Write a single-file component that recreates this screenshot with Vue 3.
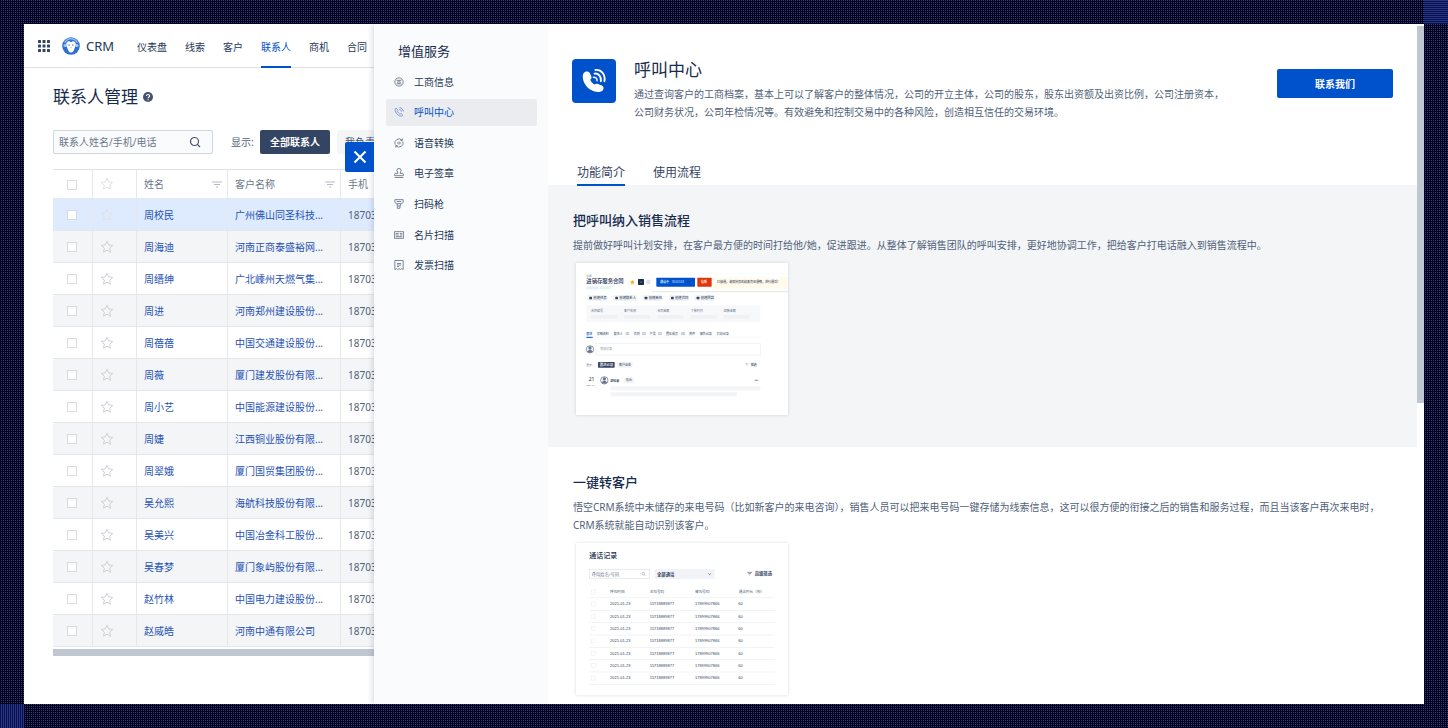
<script setup>
import { ref } from 'vue'

const navItems = ['仪表盘', '线索', '客户', '联系人', '商机', '合同']
const activeNav = ref('联系人')

const contacts = [
  ['周校民', '广州佛山同圣科技...'],
  ['周海迪', '河南正商泰盛裕网...'],
  ['周缙绅', '广北嵊州天燃气集...'],
  ['周进', '河南郑州建设股份...'],
  ['周蓓蓓', '中国交通建设股份...'],
  ['周薇', '厦门建发股份有限...'],
  ['周小艺', '中国能源建设股份...'],
  ['周婕', '江西铜业股份有限...'],
  ['周翠娥', '厦门国贸集团股份...'],
  ['吴允熙', '海航科技股份有限...'],
  ['吴美兴', '中国冶金科工股份...'],
  ['吴春梦', '厦门象屿股份有限...'],
  ['赵竹林', '中国电力建设股份...'],
  ['赵威皓', '河南中通有限公司']
]

const services = ['工商信息', '呼叫中心', '语音转换', '电子签章', '扫码枪', '名片扫描', '发票扫描']
const activeService = ref('呼叫中心')

const tabs = ['功能简介', '使用流程']
const activeTab = ref('功能简介')

const chips = [
  [36, '创建任务', 59],
  [114, '创建联系人', 70],
  [202, '创建商机', 59],
  [281, '创建合同', 59],
  [358, '创建回款', 59]
]
const fields = [[45, '合同编号'], [144, '客户名称'], [244, '合同金额'], [344, '下单时间'], [443, '回款金额']]
const detailTabs = [
  [62, '详细资料'],
  [113, '联系人'],
  [149, '(2)'],
  [173, '合同'],
  [198, '(2)'],
  [221, '产品'],
  [246, '(2)'],
  [270, '团队成员'],
  [315, '(3)'],
  [340, '附件'],
  [371, '操作记录'],
  [422, '打印记录']
]
const callHeads = [[102, '呼叫时间'], [221, '主叫号码'], [357, '被叫号码'], [488, '通话时长（秒）']]
const callRows = [0, 1, 2, 3, 4, 5, 6].map((i) => 183 + i * 37)
</script>

<template>
  <div class="desk" lang="zh-CN">
    <div class="window">
      <section class="crm">
        <header class="topbar">
          <svg class="apps" viewBox="0 0 12 12" aria-hidden="true">
            <g v-for="r in 3" :key="r">
              <rect v-for="c in 3" :key="c" :x="(c - 1) * 4.5" :y="(r - 1) * 4.5" width="3" height="3" rx="0.6" fill="#344563" />
            </g>
          </svg>
          <svg class="logo" viewBox="0 0 18 18" aria-hidden="true">
            <circle cx="9" cy="9" r="8.800" fill="#2f6fd0" />
            <path d="M2.600 5.800C4 3 6.300 1.700 9 1.700s5 1.300 6.400 4.100" fill="none" stroke="#8db8f0" stroke-width="1.400" />
            <circle cx="3" cy="8.600" r="1.500" fill="#a9cbf6" />
            <circle cx="15" cy="8.600" r="1.500" fill="#a9cbf6" />
            <path d="M9 5.200C7.200 3.400 4.200 4.400 4.200 7.400c0 1.700.7 2.500 1.100 3.500C5.900 13.400 7.200 15.400 9 15.400s3.100-2 3.700-4.500c.4-1 1.100-1.800 1.100-3.500 0-3-3-4-4.800-2.200Z" fill="#fff" />
            <circle cx="7.100" cy="8" r="0.700" fill="#2f6fd0" />
            <circle cx="10.900" cy="8" r="0.700" fill="#2f6fd0" />
            <path d="M8.400 10.400h1.200" stroke="#6fa2e8" stroke-width="0.700" />
          </svg>
          <span class="brand">CRM</span>
          <nav class="nav">
            <a v-for="n in navItems" :key="n" href="#" :class="{ on: n === activeNav }" @click.prevent="activeNav = n">{{ n }}</a>
          </nav>
        </header>

        <div class="page">
          <h1>
            联系人管理
            <svg class="help" viewBox="0 0 10 10" aria-hidden="true">
              <circle cx="5" cy="5" r="5" fill="#42526e" />
              <path d="M3.500 4c0-2 3.200-2 3.200-.1C6.700 5 5.100 5 5.100 6.200M5.100 7.200v1" fill="none" stroke="#fff" stroke-width="1.100" />
            </svg>
          </h1>

          <div class="filters">
            <div class="search">
              <input type="text" placeholder="联系人姓名/手机/电话" aria-label="联系人姓名/手机/电话" />
              <svg viewBox="0 0 12 12" aria-hidden="true">
                <circle cx="5.500" cy="5.500" r="4" fill="none" stroke="#42526e" stroke-width="1.200" />
                <path d="M8.400 8.400l2.600 2.600" stroke="#42526e" stroke-width="1.200" />
              </svg>
            </div>
            <span class="show">显示:</span>
            <button class="scope on" type="button">全部联系人</button>
            <button class="scope" type="button">我负责的</button>
          </div>

          <div class="tablebox">
            <table>
              <colgroup>
                <col class="c1" /><col class="c2" /><col class="c3" /><col class="c4" /><col class="c5" />
              </colgroup>
              <thead>
                <tr>
                  <th><input type="checkbox" aria-label="全选" /></th>
                  <th class="star faint">
                    <svg viewBox="0 0 14 14" aria-hidden="true"><path d="M7 1.200l1.700 3.700 4 .5-3 2.800.8 4L7 10.200l-3.500 2 .8-4-3-2.800 4-.5z" /></svg>
                  </th>
                  <th v-for="h in ['姓名', '客户名称']" :key="h">
                    <div class="head">
                      <span>{{ h }}</span>
                      <svg viewBox="0 0 10 7" aria-hidden="true"><path d="M0 1h10M2 3.500h6M4 6h2" stroke="#b3bac5" /></svg>
                    </div>
                  </th>
                  <th>手机</th>
                </tr>
              </thead>
              <tbody>
                <tr v-for="(c, i) in contacts" :key="c[0]" :class="{ sel: i === 0 }">
                  <td><input type="checkbox" :aria-label="c[0]" /></td>
                  <td class="star">
                    <svg viewBox="0 0 14 14" aria-hidden="true"><path d="M7 1.200l1.700 3.700 4 .5-3 2.800.8 4L7 10.200l-3.500 2 .8-4-3-2.800 4-.5z" /></svg>
                  </td>
                  <td><a href="#">{{ c[0] }}</a></td>
                  <td><a href="#">{{ c[1] }}</a></td>
                  <td>18703</td>
                </tr>
              </tbody>
            </table>
            <div class="hscroll"></div>
          </div>
        </div>
      </section>

      <aside class="drawer">
        <button class="close" type="button" aria-label="关闭">
          <svg viewBox="0 0 14 14" aria-hidden="true"><path d="M1.500 1.500l11 11M12.500 1.500l-11 11" stroke="#fff" stroke-width="2" /></svg>
        </button>

        <nav class="side">
          <h2>增值服务</h2>
          <div class="services">
            <a v-for="(s, i) in services" :key="s" href="#" :class="{ on: s === activeService }" @click.prevent="activeService = s">
              <svg viewBox="0 0 12 12" fill="none" stroke="currentColor" stroke-width="0.900" aria-hidden="true">
                <g v-if="i === 0"><circle cx="6" cy="6" r="5" /><path d="M3.200 4h5.600M6 4v4.200M3.200 8.200h5.600M4.300 5.400v1.400M7.700 5.400v1.400" /></g>
                <g v-else-if="i === 1">
                  <path d="M2.400 1.200C.8 2.400 1 5.600 3.500 8.300s5.800 3.500 7.200 1.600L8.500 7.800l-1.200.8C6 8 4.500 6.500 4 5.100l.9-1.200zM6.300.8c2.800 0 4.900 2 4.900 4.700M6.300 3c1.500 0 2.600 1 2.600 2.500" />
                </g>
                <g v-else-if="i === 2">
                  <path d="M9.600 2.600A5 5 0 0 0 1.400 8M2.400 9.400A5 5 0 0 0 10.600 4M9.900.6v2.300H7.600M2.100 11.400V9.100h2.300M4.500 5.200v1.600M6 4v4M7.500 5.200v1.600" />
                </g>
                <g v-else-if="i === 3">
                  <path d="M4.700 6.500C4.700 5 3.500 4.500 3.500 3a2.500 2.500 0 0 1 5 0C8.500 4.500 7.300 5 7.300 6.500h2.900q1 0 1 1v1.700H.8V7.500q0-1 1-1zM.8 11.400h10.400" />
                </g>
                <g v-else-if="i === 4">
                  <path d="M1 .8h10v3.300L9.300 5.600H2.700L1 4.100zM3.200 3h5.600M4 5.800v5.400h2.900l1-5.400M4.500 8.400h2.800" />
                </g>
                <g v-else-if="i === 5">
                  <path d="M.5 2h11v8H.5zM2 4.300h3.500M2 6h3.500M2 8h8M7 4.300h3M7 6h3" />
                </g>
                <g v-else>
                  <path d="M1 .6h10v10.800l-1.700-1-1.600 1L6 10.400l-1.700 1-1.600-1-1.700 1zM3.600 4.200h4.800M3.600 6h4.800M3.600 7.800h2.400" />
                </g>
              </svg>
              <span>{{ s }}</span>
            </a>
          </div>
        </nav>

        <main class="content">
          <header class="intro">
            <svg class="appicon" viewBox="0 0 44 44" aria-hidden="true">
              <rect width="44" height="44" rx="4" fill="#0052cc" />
              <path d="M15.500 12.600c-2.900-.6-4.900 1.900-4.700 5.600.3 5.400 3.800 10.500 8.800 13.100 3.900 2 9.400 2.400 11.400-.4 1.200-1.700.5-3.700-1.200-4.500l-3.800-1.500c-1.400-.5-2.400 0-3.300.7-2.500-1.100-4-3-4.400-5 .9-.7 1.500-1.600 1.100-2.900l-1.300-3.100c-.5-1.100-1.400-1.700-2.600-2Z" fill="#fff" />
              <g fill="none" stroke="#fff" stroke-width="1.900" stroke-linecap="round">
                <path d="M22.600 14.600c4-.4 7 3 6.300 7.600" />
                <path d="M23.400 11c5.600-.8 10.400 4.400 9 11.200" />
              </g>
              <path d="M20.800 18.400c2.600-.8 4.800 1.200 4.200 4" fill="none" stroke="#fff" stroke-width="1.400" />
            </svg>
            <div class="about">
              <h2>呼叫中心</h2>
              <p>通过查询客户的工商档案，基本上可以了解客户的整体情况，公司的开立主体，公司的股东，股东出资额及出资比例，公司注册资本，公司财务状况，公司年检情况等。有效避免和控制交易中的各种风险，创造相互信任的交易环境。</p>
            </div>
            <button class="contact" type="button">联系我们</button>
          </header>

          <div class="tabs" role="tablist">
            <button v-for="t in tabs" :key="t" type="button" role="tab" :aria-selected="t === activeTab" :class="{ on: t === activeTab }" @click="activeTab = t">{{ t }}</button>
          </div>

          <section class="feature grey">
            <h3>把呼叫纳入销售流程</h3>
            <p>提前做好呼叫计划安排，在客户最方便的时间打给他/她，促进跟进。从整体了解销售团队的呼叫安排，更好地协调工作，把给客户打电话融入到销售流程中。</p>
            <svg class="shot" viewBox="0 -3 636 456" role="img" aria-label="进销存服务合同">
              <text x="31" y="39" font-size="8" fill="#6b778c">合同</text>
              <text x="31" y="57" font-size="16" font-weight="500" fill="#172b4d">进销存服务合同</text>
              <rect x="31" y="67" width="36" height="9" fill="#e3effc" />
              <rect x="71" y="67" width="34" height="9" fill="#e2f7ee" />
              <path d="M169 47l2 5 5 .5-4 3.500 1.500 5.500-4.500-3-4.500 3L166 56l-4-3.500 5-.5z" fill="#ffab00" />
              <rect x="186" y="45" width="18" height="18" rx="2" fill="#172b4d" />
              <path d="M191 54h8" stroke="#8993a4" stroke-width="2" />
              <rect x="211" y="47" width="12" height="14" rx="2" fill="#dfe1e6" />
              <rect x="229" y="28" width="407" height="57" fill="#e9ebef" />
              <rect x="229" y="28" width="407" height="53" fill="#fff" />
              <rect x="241" y="41" width="116" height="27" rx="2" fill="#0052cc" />
              <text x="252" y="57" font-size="9" font-weight="700" fill="#dbe8ff">通话中</text>
              <text x="288" y="57" font-size="9" fill="#dbe8ff">00:02:03</text>
              <rect x="364" y="41" width="43" height="27" rx="2" fill="#de350b" />
              <text x="375" y="58" font-size="9" font-weight="700" fill="#ffe3db">挂断</text>
              <rect x="410" y="41" width="226" height="34" fill="#fffae9" />
              <text x="423" y="57" font-size="9" font-weight="500" fill="#42526e">已接通，请保持耳机和麦克风通畅，进行通话！</text>

              <g v-for="c in chips" :key="c[0]">
                <rect :x="c[0] - 2" y="93" :width="c[2]" height="18" rx="2" fill="#f1f3f6" />
                <rect :x="c[0] + 4" y="98" width="8" height="8" rx="2" fill="#344563" />
                <text :x="c[0] + 16" y="106" font-size="10" font-weight="500" fill="#42526e">{{ c[1] }}</text>
              </g>

              <rect x="31" y="124" width="522" height="50" fill="#f7f8fa" />
              <g v-for="f in fields" :key="f[0]">
                <text :x="f[0]" y="143" font-size="9" fill="#6b778c">{{ f[1] }}</text>
                <rect :x="f[0]" y="153" width="78" height="11" fill="#f0f1f4" />
              </g>

              <text x="31" y="213" font-size="9" font-weight="500" fill="#0052cc">跟进</text>
              <text v-for="d in detailTabs" :key="d[0]" :x="d[0]" y="213" font-size="9" font-weight="500" fill="#505f79">{{ d[1] }}</text>
              <path d="M31 220h522" stroke="#f0f1f4" stroke-width="2" />
              <path d="M31 220h19" stroke="#0052cc" stroke-width="3" />

              <circle cx="42" cy="256" r="11" fill="#fff" stroke="#505f79" stroke-width="2" />
              <circle cx="42" cy="252" r="5" fill="#6b778c" />
              <path d="M34 263c2-8 14-8 16 0-4 4-12 4-16 0z" fill="#6b778c" />
              <rect x="60" y="239" width="493" height="34" fill="#fff" stroke="#eceef2" stroke-width="2" />
              <text x="72" y="258" font-size="9" fill="#8993a4">添加记录</text>

              <text x="31" y="306" font-size="8" fill="#505f79">显示:</text>
              <rect x="66" y="294" width="50" height="17" rx="2" fill="#344563" />
              <text x="71" y="306" font-size="10" font-weight="500" fill="#fff">跟进记录</text>
              <rect x="124" y="294" width="46" height="17" rx="2" fill="#f1f3f6" />
              <text x="129" y="306" font-size="9" font-weight="500" fill="#505f79">客户动态</text>
              <path d="M508 299h9M510 302h5M512 305h2" stroke="#6b778c" />
              <text x="524" y="305" font-size="9" font-weight="700" fill="#42526e">筛选</text>

              <text x="38" y="350" font-size="15" fill="#172b4d">21</text>
              <text x="31" y="367" font-size="7" fill="#6b778c">2021-01</text>
              <circle cx="85" cy="349" r="11" fill="#fff" stroke="#505f79" stroke-width="2" />
              <circle cx="85" cy="345" r="5" fill="#6b778c" />
              <path d="M77 356c2-8 14-8 16 0-4 4-12 4-16 0z" fill="#6b778c" />
              <text x="103" y="353" font-size="9" font-weight="700" fill="#344563">胡晓云</text>
              <rect x="144" y="341" width="30" height="16" rx="2" fill="#f1f3f6" />
              <text x="149" y="352" font-size="9" fill="#505f79">电话</text>
              <path d="M536 349h12" stroke="#6b778c" stroke-width="3" stroke-dasharray="3 1" />
              <rect x="104" y="367" width="449" height="12" fill="#f3f4f6" />
              <rect x="104" y="385" width="379" height="12" fill="#f3f4f6" />
            </svg>
          </section>

          <section class="feature">
            <h3>一键转客户</h3>
            <p>悟空CRM系统中未储存的来电号码（比如新客户的来电咨询），销售人员可以把来电号码一键存储为线索信息，这可以很方便的衔接之后的销售和服务过程，而且当该客户再次来电时，CRM系统就能自动识别该客户。</p>
            <svg class="shot" viewBox="0 0 636 456" role="img" aria-label="通话记录">
              <text x="40" y="46" font-size="21" font-weight="500" fill="#172b4d">通话记录</text>
              <rect x="40" y="79" width="181" height="28" fill="#fff" stroke="#dfe1e6" stroke-width="2" />
              <text x="47" y="98" font-size="13" fill="#7a869a">呼叫姓名/号码</text>
              <circle cx="202" cy="92" r="4" fill="none" stroke="#505f79" stroke-width="1" />
              <path d="M205 95l3 3" stroke="#505f79" />
              <rect x="236" y="78" width="180" height="30" fill="#f1f3f6" />
              <text x="243" y="98" font-size="13" font-weight="700" fill="#344563">全部通话</text>
              <path d="M397 91l4 4 4-4" fill="none" stroke="#505f79" stroke-width="2" />
              <path d="M514 88h14M517 92h8M520 96h2" stroke="#505f79" stroke-width="2" />
              <text x="536" y="96" font-size="13" font-weight="700" fill="#344563">高级筛选</text>

              <rect x="46" y="141" width="12" height="12" fill="#fff" stroke="#dfe1e6" />
              <text v-for="h in callHeads" :key="h[0]" :x="h[0]" y="151" font-size="11" fill="#505f79">{{ h[1] }}</text>
              <path d="M40 164h556" stroke="#eceef2" stroke-width="2" />
              <g v-for="y in callRows" :key="y" font-size="12" font-weight="500" fill="#344563">
                <rect x="46" :y="y - 6" width="12" height="12" fill="#fff" stroke="#dfe1e6" />
                <text class="num" x="102" :y="y + 4">2021-01-23</text>
                <text class="num" x="221" :y="y + 4">15718889877</text>
                <text class="num" x="357" :y="y + 4">17899907866</text>
                <text class="num" x="487" :y="y + 4">60</text>
                <rect x="40" :y="y + 18" width="556" height="2" fill="#eceef2" />
              </g>
            </svg>
          </section>
        </main>
        <div class="vscroll"></div>
      </aside>
    </div>
  </div>
</template>

<style>
body {
  margin: 0;
}
</style>

<style scoped>
.desk {
  position: relative;
  box-sizing: border-box;
  height: 100vh;
  padding: 24px;
  font-family: "Noto Sans", "Noto Sans CJK SC", sans-serif;
  font-size: 10px;
  line-height: 18px;
  color: #505f79;
  background-color: #00001c;
  background-image:
    repeating-linear-gradient(90deg, #00001c 0 1px, transparent 1px 2px),
    repeating-linear-gradient(0deg, #00001c 0 1px, #33427f 1px 2px);
}
.desk::before,
.desk::after {
  content: "";
  position: absolute;
  width: 24px;
  height: 24px;
}
.desk::before {
  left: 0;
  bottom: 0;
  background: repeating-linear-gradient(90deg, #0a1048 0 1px, #26378a 1px 2px);
}
.desk::after {
  right: 0;
  top: 0;
  background: repeating-linear-gradient(0deg, #0a1048 0 1px, #26378a 1px 2px);
}
* {
  box-sizing: border-box;
}
h1, h2, h3, p {
  margin: 0;
}
h1, h2 {
  font-weight: 400;
  color: #172b4d;
}
a {
  text-decoration: none;
  color: inherit;
}
button, input {
  font: inherit;
  margin: 0;
  padding: 0;
  border: 0;
}
svg {
  display: block;
  flex: none;
}
.window {
  display: flex;
  height: 100%;
  overflow: hidden;
  background: #fff;
}

/* contact list behind the drawer */
.crm {
  flex: none;
  width: 350px;
  overflow: hidden;
}
.topbar {
  display: flex;
  align-items: center;
  height: 44px;
  padding-left: 14px;
  border-bottom: 1px solid #dfe1e6;
  color: #253858;
}
.apps {
  width: 12px;
  height: 12px;
}
.logo {
  width: 18px;
  height: 18px;
  margin: 0 6px 0 12px;
}
.brand {
  width: 51px;
  font-size: 13px;
}
.nav {
  display: flex;
  align-self: stretch;
  gap: 18px;
}
.nav a {
  flex: none;
  height: 44px;
  line-height: 46px;
  white-space: nowrap;
}
.nav .on {
  color: #0052cc;
  border-bottom: 2px solid #0052cc;
}
.page {
  padding: 16px 0 0 29px;
}
h1 {
  display: flex;
  align-items: center;
  gap: 5px;
  font-size: 17px;
  line-height: 26px;
}
.help {
  width: 10px;
  height: 10px;
}
.filters {
  display: flex;
  align-items: center;
  width: 380px;
  height: 24px;
  margin: 20px 0 15px;
}
.search {
  display: flex;
  align-items: center;
  flex: none;
  width: 160px;
  height: 24px;
  margin-right: 18px;
  padding: 0 11px 0 5px;
  border: 1px solid #d0d4db;
  border-radius: 2px;
  background: #fafbfc;
}
.search input {
  flex: 1;
  min-width: 0;
  background: none;
  outline: 0;
}
.search input::placeholder {
  color: #6b778c;
  opacity: 1;
}
.search svg {
  width: 12px;
  height: 12px;
}
.show {
  width: 29px;
}
.scope {
  flex: none;
  height: 24px;
  margin-right: 7px;
  padding: 0 8px;
  border-radius: 2px;
  color: #42526e;
  background: #f4f5f7;
}
.scope.on {
  width: 70px;
  font-weight: 700;
  color: #fff;
  background: #344563;
}
table {
  width: 372px;
  table-layout: fixed;
  border-collapse: separate;
  border-spacing: 0;
  border-top: 1px solid #dfe1e6;
}
.c1 { width: 40px; }
.c2 { width: 44px; }
.c3 { width: 91px; }
.c4 { width: 113px; }
.c5 { width: 84px; }
th, td {
  height: 32px;
  padding: 0 5px 0 7px;
  border-right: 1px solid #e4e7eb;
  border-bottom: 1px solid #e4e7eb;
  font-weight: 400;
  text-align: left;
  white-space: nowrap;
}
th {
  height: 29px;
  color: #6b778c;
}
th:first-child, td:first-child {
  padding: 0 0 0 14px;
}
td a {
  color: #1f52b3;
}
tbody tr:nth-child(even) td {
  background: #f4f5f7;
}
tbody .sel td {
  background: #deebff;
}
table input {
  display: block;
  appearance: none;
  width: 10px;
  height: 10px;
  margin-top: 1px;
  border: 1px solid #d8dbe1;
  background: #fff;
}
.star svg {
  width: 14px;
  height: 14px;
  fill: none;
  stroke: #cdd1d8;
}
.star.faint svg,
.sel .star svg {
  stroke: #dfe1e6;
}
.head {
  display: flex;
  align-items: center;
  justify-content: space-between;
}
.head svg {
  width: 10px;
  height: 7px;
}
.hscroll {
  height: 7px;
  margin-top: 2px;
  background: #c1c7d0;
}

/* drawer */
.drawer {
  position: relative;
  display: flex;
  flex: 1;
  min-width: 0;
  background: #fff;
  box-shadow: -1px 0 6px rgba(9, 30, 66, 0.18);
}
.close {
  position: absolute;
  left: -29px;
  top: 118px;
  display: grid;
  place-items: center;
  width: 29px;
  height: 30px;
  border-radius: 2px 0 0 2px;
  background: #0052cc;
}
.close svg {
  width: 14px;
  height: 14px;
}
.side {
  flex: none;
  width: 174px;
  padding: 17px 11px 0 12px;
  background: #fafbfc;
}
.side h2 {
  height: 27px;
  padding-left: 12px;
  font-size: 13px;
  line-height: 20px;
}
.services {
  display: flex;
  flex-direction: column;
  justify-content: space-between;
  height: 211px;
}
.side a {
  display: flex;
  align-items: center;
  gap: 10px;
  height: 27px;
  padding-left: 8px;
  border-radius: 2px;
  color: #253858;
}
.side a.on {
  color: #0052cc;
  background: #ebecf0;
}
.side svg {
  width: 10px;
  height: 10px;
  color: #505f79;
}
.side .on svg {
  color: #6c7fd0;
}
.content {
  flex: 1;
  min-width: 0;
  overflow: hidden;
}
.intro {
  display: flex;
  align-items: flex-start;
  padding: 35px 24px 0;
}
.appicon {
  width: 44px;
  height: 44px;
  margin-right: 18px;
}
.about {
  flex: 0 1 596px;
  margin-right: auto;
}
.about h2 {
  margin-bottom: 4px;
  font-size: 17px;
  line-height: 22px;
}
.contact {
  flex: none;
  width: 116px;
  height: 29px;
  margin-top: 10px;
  border-radius: 2px;
  font-weight: 700;
  color: #fff;
  background: #0052cc;
}
.tabs {
  position: relative;
  display: flex;
  gap: 28px;
  height: 23px;
  margin-top: 41px;
  padding-left: 29px;
}
.tabs button {
  height: 24px;
  border-bottom: 2px solid transparent;
  font-size: 12px;
  line-height: 22px;
  color: #344563;
  background: none;
}
.tabs .on {
  border-color: #0052cc;
}
.feature {
  padding: 25px 20px 32px 25px;
}
.grey {
  background: #f3f5f7;
}
.feature h3 {
  margin-bottom: 6px;
  font-size: 13px;
  font-weight: 500;
  line-height: 20px;
  color: #172b4d;
}
.feature p {
  margin-bottom: 9px;
}
.shot {
  width: 212px;
  height: 152px;
  margin-left: 3px;
  background: #fff;
  box-shadow: 0 0 3px rgba(9, 30, 66, 0.16);
}
.num {
  font-family: "Liberation Sans", sans-serif;
}
.vscroll {
  flex: none;
  width: 7px;
  height: 377px;
  margin-top: 2px;
  background: #c1c7d0;
}
</style>
